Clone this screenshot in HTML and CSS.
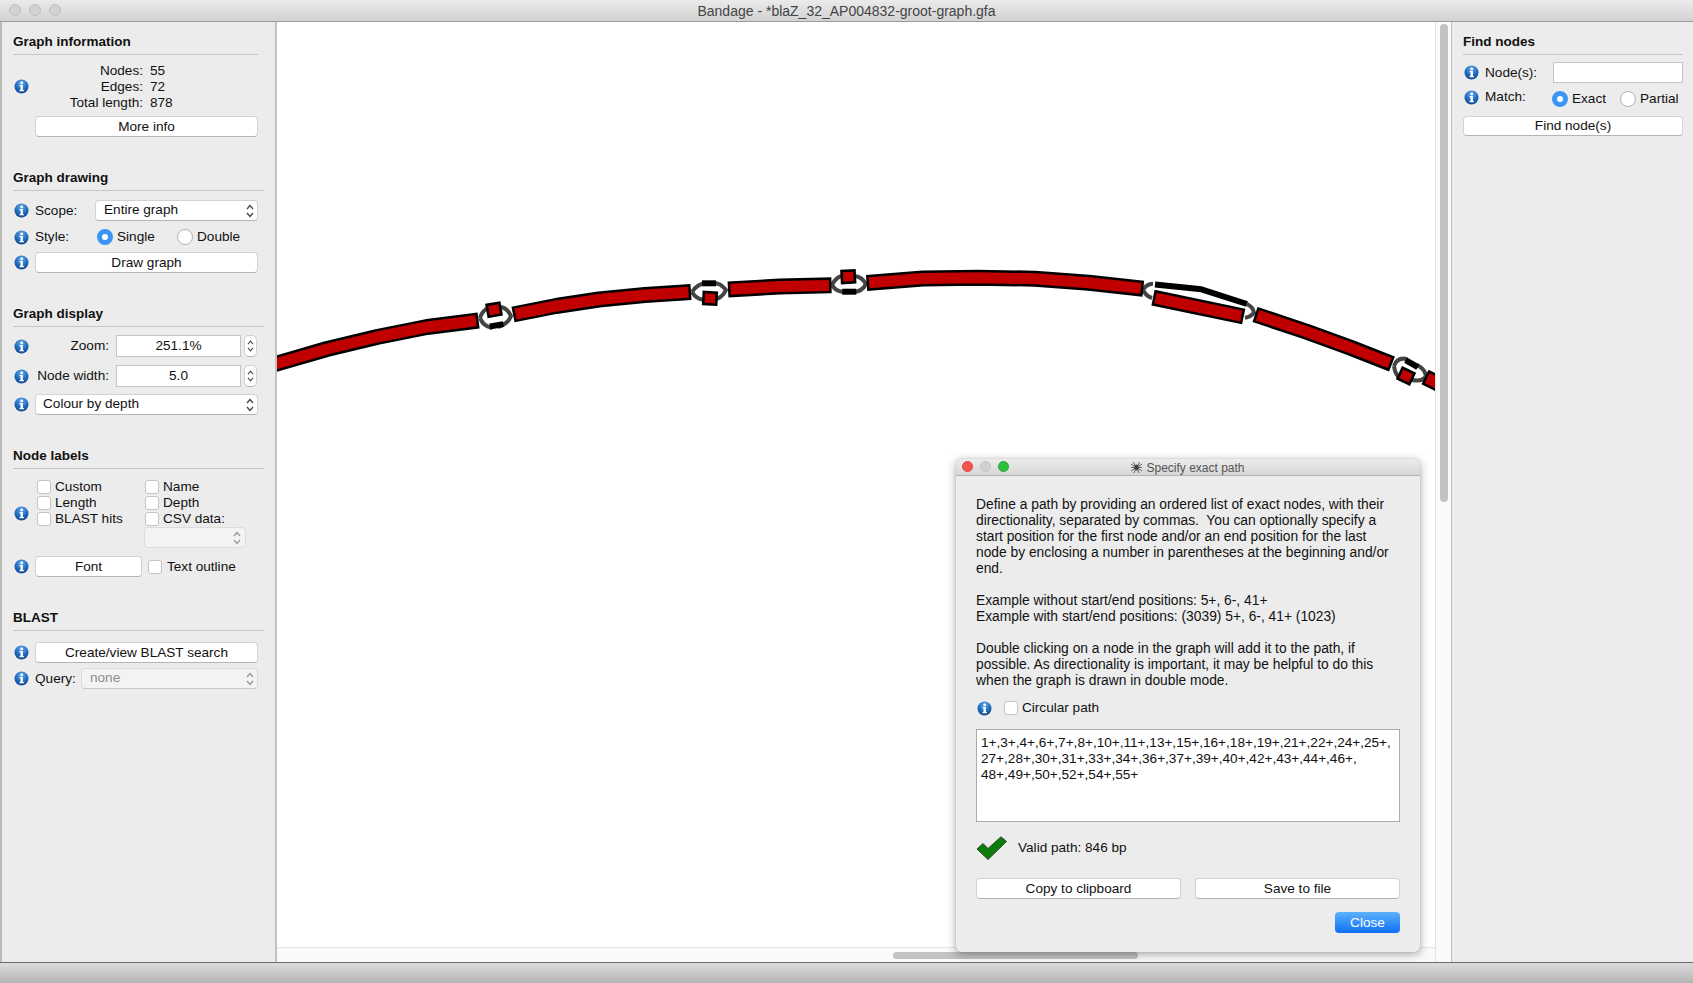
FILE: index.html
```html
<!DOCTYPE html>
<html lang="en">
<head>
<meta charset="utf-8">
<title>Bandage</title>
<link rel="stylesheet" href="styles.css">
</head>
<body>
<svg class="defs" width="0" height="0" aria-hidden="true">
  <defs>
    <radialGradient id="infoFill" cx="50%" cy="25%" r="80%">
      <stop offset="0" stop-color="#6aa8e8"/>
      <stop offset="0.55" stop-color="#1f6dc0"/>
      <stop offset="1" stop-color="#0c3f86"/>
    </radialGradient>
    <symbol id="info" viewBox="0 0 15 15">
      <circle cx="7.5" cy="7.5" r="7" fill="url(#infoFill)"/>
      <circle cx="7.7" cy="3.9" r="1.4" fill="#fff"/>
      <path d="M5.6 6.1h3.3v5h1v1.1H5.5v-1.1h1v-3.9h-.9z" fill="#fff"/>
    </symbol>
    <symbol id="updown" viewBox="0 0 8 14">
      <path d="M1 5L4 1.5L7 5M1 9L4 12.5L7 9" fill="none" stroke="currentColor" stroke-width="1.3"/>
    </symbol>
  </defs>
</svg>
<div class="window">
  <header class="titlebar">
    <div class="lights">
      <span class="light"></span><span class="light"></span><span class="light"></span>
    </div>
    <span class="title-text">Bandage - *blaZ_32_AP004832-groot-graph.gfa</span>
  </header>
  <div class="main">
    <aside class="panel panel-left">
      <section>
        <h2 class="section-title section-title-short">Graph information</h2>
        <div class="row info-row">
          <svg class="icon"><use href="#info"/></svg>
          <dl class="stats">
            <dt>Nodes:</dt><dd>55</dd>
            <dt>Edges:</dt><dd>72</dd>
            <dt>Total length:</dt><dd>878</dd>
          </dl>
        </div>
        <div class="row row-btn-first"><span class="icon-space"></span><button class="btn grow">More info</button></div>
      </section>
      <section class="section">
        <h2 class="section-title">Graph drawing</h2>
        <div class="row row-scope">
          <svg class="icon"><use href="#info"/></svg>
          <span class="label label-scope">Scope:</span>
          <div class="select grow"><span>Entire graph</span><svg class="chev"><use href="#updown"/></svg></div>
        </div>
        <div class="row row-style">
          <svg class="icon"><use href="#info"/></svg>
          <span class="label label-style">Style:</span>
          <span class="option option-single"><span class="radio on"></span>Single</span>
          <span class="option"><span class="radio"></span>Double</span>
        </div>
        <div class="row row-draw">
          <svg class="icon"><use href="#info"/></svg>
          <button class="btn grow">Draw graph</button>
        </div>
      </section>
      <section class="section">
        <h2 class="section-title">Graph display</h2>
        <div class="row row-zoom">
          <svg class="icon"><use href="#info"/></svg>
          <span class="label label-right">Zoom:</span>
          <div class="field">251.1%</div>
          <div class="spinner"><svg class="chev-spin"><use href="#updown"/></svg></div>
        </div>
        <div class="row row-node-width">
          <svg class="icon"><use href="#info"/></svg>
          <span class="label label-right">Node width:</span>
          <div class="field">5.0</div>
          <div class="spinner"><svg class="chev-spin"><use href="#updown"/></svg></div>
        </div>
        <div class="row row-colour">
          <svg class="icon"><use href="#info"/></svg>
          <div class="select grow"><span>Colour by depth</span><svg class="chev"><use href="#updown"/></svg></div>
        </div>
      </section>
      <section class="section">
        <h2 class="section-title">Node labels</h2>
        <div class="row row-labels">
          <svg class="icon"><use href="#info"/></svg>
          <div class="labels-grid">
            <span class="check-item"><span class="checkbox"></span>Custom</span>
            <span class="check-item"><span class="checkbox"></span>Name</span>
            <span class="check-item"><span class="checkbox"></span>Length</span>
            <span class="check-item"><span class="checkbox"></span>Depth</span>
            <span class="check-item"><span class="checkbox"></span>BLAST hits</span>
            <span class="check-item"><span class="checkbox"></span>CSV data:</span>
            <span></span>
            <div class="select select-disabled select-csv"><svg class="chev"><use href="#updown"/></svg></div>
          </div>
        </div>
        <div class="row row-font">
          <svg class="icon"><use href="#info"/></svg>
          <button class="btn btn-font">Font</button>
          <span class="check-item check-outline"><span class="checkbox"></span>Text outline</span>
        </div>
      </section>
      <section class="section">
        <h2 class="section-title">BLAST</h2>
        <div class="row row-blast">
          <svg class="icon"><use href="#info"/></svg>
          <button class="btn grow">Create/view BLAST search</button>
        </div>
        <div class="row row-query">
          <svg class="icon"><use href="#info"/></svg>
          <span class="label label-query">Query:</span>
          <div class="select select-disabled select-strong grow"><span>none</span><svg class="chev"><use href="#updown"/></svg></div>
        </div>
      </section>
    </aside>

    <div class="center">
      <div class="viewport">
        <svg class="graph" width="1158" height="926" viewBox="277 21 1158 926">
          <g fill="none" stroke="#444" stroke-width="4" stroke-linejoin="round">
            <path d="M480 317Q482 310 488 307M480 317Q483 325 492 327M499 306Q507 306 511 315Q508 323 498 326"/>
            <path d="M692 291Q697 283 706 282M692 291Q696 298 704 299M712 282Q720 281 726 289Q722 298 712 299"/>
            <path d="M832 284Q836 276 842 275M832 284Q836 291 845 291M855 275Q862 276 866 283Q862 291 853 291"/>
            <path d="M1143 289Q1146 283 1153 282.7M1143 289Q1146 295 1152 297M1247 303Q1253 306 1254 311.7Q1251 316 1245 316.7"/>
            <path d="M1394 365Q1397 356 1407 358M1394 365Q1395 374 1401 378M1417 364Q1425 368 1426 375Q1423 381 1412 379"/>
          </g>
          <g fill="none" stroke="#000" stroke-width="16" stroke-linejoin="round">
            <path d="M270 364.5L327 348L377 336L427 326L478.6 319.5"/>
            <path d="M513 313.5L556 305L599 298.5L645 294L691 291"/>
            <path d="M728 288.5L780 285.5L831.5 284.3"/>
            <path d="M866.6 282L922.8 277.5L978 276.7L1035 277.7L1088.8 281.7L1143.3 287.7"/>
            <path d="M1153 296.7L1243.7 315.5"/>
            <path d="M1255 313.5L1306 330.5L1350 346.5L1392 363"/>
            <path d="M1425 376L1445 386"/>
          </g>
          <g fill="none" stroke="#c00000" stroke-width="11" stroke-linejoin="round">
            <path d="M270 364.5L327 348L377 336L427 326L476.1 319.8"/>
            <path d="M515.5 313L556 305L599 298.5L645 294L688.5 291.2"/>
            <path d="M730.5 288.3L780 285.5L829 284.4"/>
            <path d="M869 281.8L922.8 277.5L978 276.7L1035 277.7L1088.8 281.7L1140.8 287.4"/>
            <path d="M1155.5 297.2L1241.3 315"/>
            <path d="M1257.4 314.3L1306 330.5L1350 346.5L1389.7 362"/>
            <path d="M1427.2 377.1L1445 386"/>
          </g>
          <g fill="none" stroke="#000" stroke-width="6" stroke-linejoin="round">
            <path d="M1155 283.5L1201.4 288.3L1247 303"/>
            <path d="M489.8 325.5L503.4 323.1"/>
            <path d="M702 282.3H716"/>
            <path d="M842.3 290.7H856.3"/>
            <path d="M1405.6 359.2L1417.8 366.2"/>
          </g>
          <g fill="#c00000" stroke="#000" stroke-width="2.6">
            <rect x="-6.5" y="-6" width="13" height="12" transform="translate(494 308.7) rotate(-10)"/>
            <rect x="-6.5" y="-6" width="13" height="12" transform="translate(710 297.3) rotate(3)"/>
            <rect x="-6.5" y="-6" width="13" height="12" transform="translate(848.3 275.7) rotate(-3)"/>
            <rect x="-6.5" y="-6" width="13" height="12" transform="translate(1406 375) rotate(25)"/>
          </g>
        </svg>
      </div>
      <div class="vscroll"><div class="vthumb"></div></div>
      <div class="hscroll"><div class="hthumb"></div></div>

      <div class="dialog">
        <div class="dialog-bar">
          <div class="dialog-lights">
            <span class="dot dot-red"></span><span class="dot dot-gray"></span><span class="dot dot-green"></span>
          </div>
          <svg class="spider" width="11" height="11" viewBox="0 0 11 11">
            <g fill="none" stroke="#555" stroke-width="0.9">
              <path d="M0 2L3 4L5.5 5.5L8 4L11 2M0 5.5H11M0 9L3 7L5.5 5.5L8 7L11 9M2.5 0L4 3.5M8.5 0L7 3.5M3 11L4.5 7.5M8 11L6.5 7.5"/>
            </g>
            <ellipse cx="5.5" cy="5.5" rx="2.2" ry="3" fill="#444"/>
          </svg>
          <span class="dialog-title">Specify exact path</span>
        </div>
        <div class="dialog-body">
          <p class="para">Define a path by providing an ordered list of exact nodes, with their<br>directionality, separated by commas.&nbsp; You can optionally specify a<br>start position for the first node and/or an end position for the last<br>node by enclosing a number in parentheses at the beginning and/or<br>end.</p>
          <p class="para para-next">Example without start/end positions: 5+, 6-, 41+<br>Example with start/end positions: (3039) 5+, 6-, 41+ (1023)</p>
          <p class="para para-next">Double clicking on a node in the graph will add it to the path, if<br>possible. As directionality is important, it may be helpful to do this<br>when the graph is drawn in double mode.</p>
          <div class="row row-circular">
            <svg class="icon icon-dialog"><use href="#info"/></svg>
            <span class="check-item"><span class="checkbox"></span>Circular path</span>
          </div>
          <div class="path-box">1+,3+,4+,6+,7+,8+,10+,11+,13+,15+,16+,18+,19+,21+,22+,24+,25+,<br>27+,28+,30+,31+,33+,34+,36+,37+,39+,40+,42+,43+,44+,46+,<br>48+,49+,50+,52+,54+,55+</div>
          <div class="row row-valid">
            <svg class="check-mark" width="31" height="24" viewBox="0 0 31 24">
              <path d="M1 13L7 7.5L12 12.5L25 .8L30.5 5.5L12 23.5z" fill="#0a7c0a" stroke="#2c4a2c" stroke-width="1"/>
            </svg>
            <span>Valid path: 846 bp</span>
          </div>
          <div class="row row-actions">
            <button class="btn grow">Copy to clipboard</button>
            <button class="btn grow">Save to file</button>
          </div>
          <div class="row row-close"><button class="btn-primary">Close</button></div>
        </div>
      </div>
    </div>

    <aside class="panel panel-right">
      <h2 class="section-title">Find nodes</h2>
      <div class="row row-find">
        <svg class="icon"><use href="#info"/></svg>
        <span class="label label-find">Node(s):</span>
        <div class="field field-find"></div>
      </div>
      <div class="row row-match">
        <svg class="icon"><use href="#info"/></svg>
        <span class="label label-find">Match:</span>
        <span class="option option-exact"><span class="radio on"></span>Exact</span>
        <span class="option option-partial"><span class="radio"></span>Partial</span>
      </div>
      <button class="btn btn-find">Find node(s)</button>
    </aside>
  </div>
  <footer class="statusbar"></footer>
</div>
</body>
</html>
```

FILE: styles.css
```css
* { box-sizing: border-box; }
html, body { margin: 0; padding: 0; }
body {
  width: 1693px;
  height: 983px;
  overflow: hidden;
  font: 13.6px/16px "Liberation Sans", Arial, sans-serif;
  color: #111;
  background: #ececec;
}
.defs { position: absolute; }
.window { display: flex; flex-direction: column; height: 983px; }

.titlebar {
  height: 22px;
  flex: none;
  display: flex;
  align-items: center;
  position: relative;
  justify-content: center;
  background: linear-gradient(#ebebeb, #d2d2d2);
  border-bottom: 1px solid #9c9c9c;
}
.lights { position: absolute; left: 9px; top: 4px; display: flex; gap: 8px; }
.light {
  width: 12px; height: 12px; border-radius: 50%;
  background: #d2d2d2; border: 1px solid #bfbfbf;
}
.title-text { color: #444; font-size: 14px; }

.main { flex: 1; display: flex; min-height: 0; }

.panel { background: #ececec; flex: none; padding-top: 11px; }
.panel-left {
  width: 277px;
  padding-left: 11px;
  padding-right: 11px;
  border-left: 2px solid #b9b9b9;
  border-right: 2px solid #c2c2c2;
}
.panel-right {
  width: 243px;
  padding-left: 11px;
  padding-right: 10px;
  border-left: 2px solid #bdbdbd;
}

.section { margin-top: 32px; }
.section-title {
  margin: 0;
  padding: 1px 0 4px;
  border-bottom: 1px solid #c6c6c6;
  font-size: 13.5px;
  line-height: 16px;
  font-weight: bold;
  color: #111;
}
.section-title-short { margin-right: 6px; }

.row { display: flex; align-items: center; }
.panel-left .row { padding-right: 6px; }
.icon {
  width: 15px; height: 15px; flex: none;
  margin-left: 1px; margin-right: 6px;
}
.icon-space { width: 22px; flex: none; }
.grow { flex: 1; min-width: 0; }

.info-row { margin-top: 7px; height: 48px; }
.stats {
  margin: 2px 0 0;
  display: grid;
  grid-template-columns: 108px auto;
  column-gap: 7px;
}
.stats dt { text-align: right; }
.stats dd { margin: 0; }
.row-btn-first { margin-top: 6px; }

.btn {
  height: 21px;
  padding: 0;
  font: inherit;
  line-height: 18px;
  color: #111;
  background: #fff;
  border: 1px solid #d2d2d2;
  border-bottom-color: #b4b4b4;
  border-radius: 4px;
}
.select {
  height: 20px;
  display: flex;
  align-items: center;
  justify-content: space-between;
  padding: 0 3px 2px 8px;
  background: #fff;
  border: 1px solid #d2d2d2;
  border-bottom-color: #b4b4b4;
  border-radius: 4px;
}
.chev { width: 8px; height: 14px; flex: none; color: #444; position: relative; top: 1px; }
.select-disabled { background: #f3f3f3; border-color: #dcdcdc; color: #8c8c8c; }
.select-disabled .chev { color: #999; }
.select-strong { border-bottom-color: #c6c6c6; padding-left: 8px; }
.select-csv { justify-content: flex-end; width: 102px; margin-left: -1px; height: 21px; padding-right: 4px; }

.label { flex: none; }
.label-scope { width: 60px; }
.row-scope { margin-top: 9px; }
.row-scope .select { height: 21px; }
.row-style { margin-top: 8px; height: 16px; }
.label-style { width: 62px; }
.option { display: flex; align-items: center; gap: 4px; }
.option-single { width: 80px; }
.radio {
  width: 16px; height: 16px; flex: none; border-radius: 50%;
  background: #fff; border: 1px solid #b4b4b4;
}
.radio.on {
  background: #fff;
  border: 5px solid #3b95f5;
}
.row-draw { margin-top: 7px; }

.row-zoom { margin-top: 8px; }
.row-node-width { margin-top: 8px; }
.label-right { width: 74px; text-align: right; margin-right: 7px; white-space: nowrap; }
.field {
  height: 22px;
  width: 125px;
  background: #fff;
  border: 1px solid #c4c4c4;
  text-align: center;
  line-height: 20px;
}
.spinner {
  margin-left: 3px;
  width: 13px; height: 22px;
  display: flex; align-items: center; justify-content: center;
  background: #fff;
  border: 1px solid #d2d2d2;
  border-bottom-color: #b4b4b4;
  border-radius: 5px;
  color: #444;
}
.chev-spin { width: 7px; height: 14px; }
.row-colour { margin-top: 7px; }
.row-colour .select { height: 21px; padding-left: 7px; }

.row-labels { margin-top: 10px; }
.labels-grid {
  padding-left: 2px;
  display: grid;
  grid-template-columns: 108px 102px;
}
.check-item { display: flex; align-items: center; gap: 4px; height: 16px; white-space: nowrap; }
.checkbox {
  width: 14px; height: 14px; flex: none;
  background: #fff;
  border: 1px solid #c4c4c4;
  border-radius: 3px;
}
.row-font { margin-top: 8px; }
.btn-font { width: 107px; }
.check-outline { margin-left: 6px; gap: 5px; }

.row-blast { margin-top: 11px; }
.row-query { margin-top: 5px; }
.row-query .select { height: 21px; }
.label-query { width: 46px; }

.center {
  flex: 1;
  position: relative;
  display: grid;
  grid-template-columns: 1158px 1fr;
  grid-template-rows: 925px 1fr;
  background: #fff;
  min-width: 0;
}
.viewport { overflow: hidden; background: #fff; }
.graph { display: block; }
.vscroll {
  background: #fafafa;
  border-left: 1px solid #e4e4e4;
  padding: 2px 3px 0 4px;
  grid-row: 1 / span 2;
  grid-column: 2;
}
.vthumb { width: 8px; height: 478px; border-radius: 4px; background: #c2c2c2; }
.hscroll {
  background: #fafafa;
  border-top: 1px solid #e4e4e4;
  padding: 4px 0 0 616px;
}
.hthumb { width: 245px; height: 7px; border-radius: 4px; background: #c2c2c2; }

.dialog {
  position: absolute;
  left: 679px;
  top: 437px;
  width: 464px;
  height: 493px;
  background: #ececec;
  border-radius: 5px;
  box-shadow: 0 2px 10px rgba(0, 0, 0, 0.35), 0 0 1px rgba(0, 0, 0, 0.4);
}
.dialog-bar {
  height: 17px;
  position: relative;
  display: flex;
  align-items: center;
  justify-content: center;
  gap: 4px;
  border-radius: 5px 5px 0 0;
  background: linear-gradient(#ececec, #d6d6d6);
  border-bottom: 1px solid #b4b4b4;
}
.dialog-lights { position: absolute; left: 6px; top: 2px; display: flex; gap: 7px; }
.dot { width: 11px; height: 11px; border-radius: 50%; }
.dot-red { background: #f5544d; border: 1px solid #e0443e; }
.dot-gray { background: #d0d0d0; border: 1px solid #c4c4c4; }
.dot-green { background: #2fc03f; border: 1px solid #25a832; }
.dialog-title { color: #555; font-size: 12px; padding-top: 1px; }

.dialog-body { padding: 21px 20px 0; }
.para { margin: 0; line-height: 16px; font-size: 13.8px; }
.para-next { margin-top: 16px; }
.row-circular { margin-top: 11px; height: 16px; }
.icon-dialog { margin-right: 12px; }
.path-box {
  margin-top: 13px;
  height: 93px;
  padding: 5px 4px;
  background: #fff;
  border: 1px solid #acacac;
  white-space: nowrap;
}
.row-valid { margin-top: 14px; height: 24px; gap: 11px; }
.check-mark { flex: none; margin-top: -1px; }
.row-actions { margin-top: 18px; gap: 14px; }
.row-close { margin-top: 13px; justify-content: flex-end; }
.btn-primary {
  width: 65px;
  height: 21px;
  padding: 0;
  font: inherit;
  color: #fff;
  border: 0;
  border-radius: 4px;
  background: linear-gradient(#5cb1fb, #0f70f5);
}

.row-find { margin-top: 7px; height: 21px; }
.row-match { margin-top: 6px; height: 16px; }
.label-find { width: 68px; }
.field-find { height: 21px; width: 130px; border-color: #c4c4c4; }
.option-exact { width: 68px; position: relative; top: 2px; margin-left: -1px; }
.option-partial { position: relative; top: 2px; }
.btn-find { display: block; width: 220px; height: 20px; margin-top: 11px; }

.statusbar {
  flex: none;
  height: 21px;
  background: linear-gradient(#dcdcdc, #b5b5b5);
  border-top: 1px solid #6a6a6a;
}
```
